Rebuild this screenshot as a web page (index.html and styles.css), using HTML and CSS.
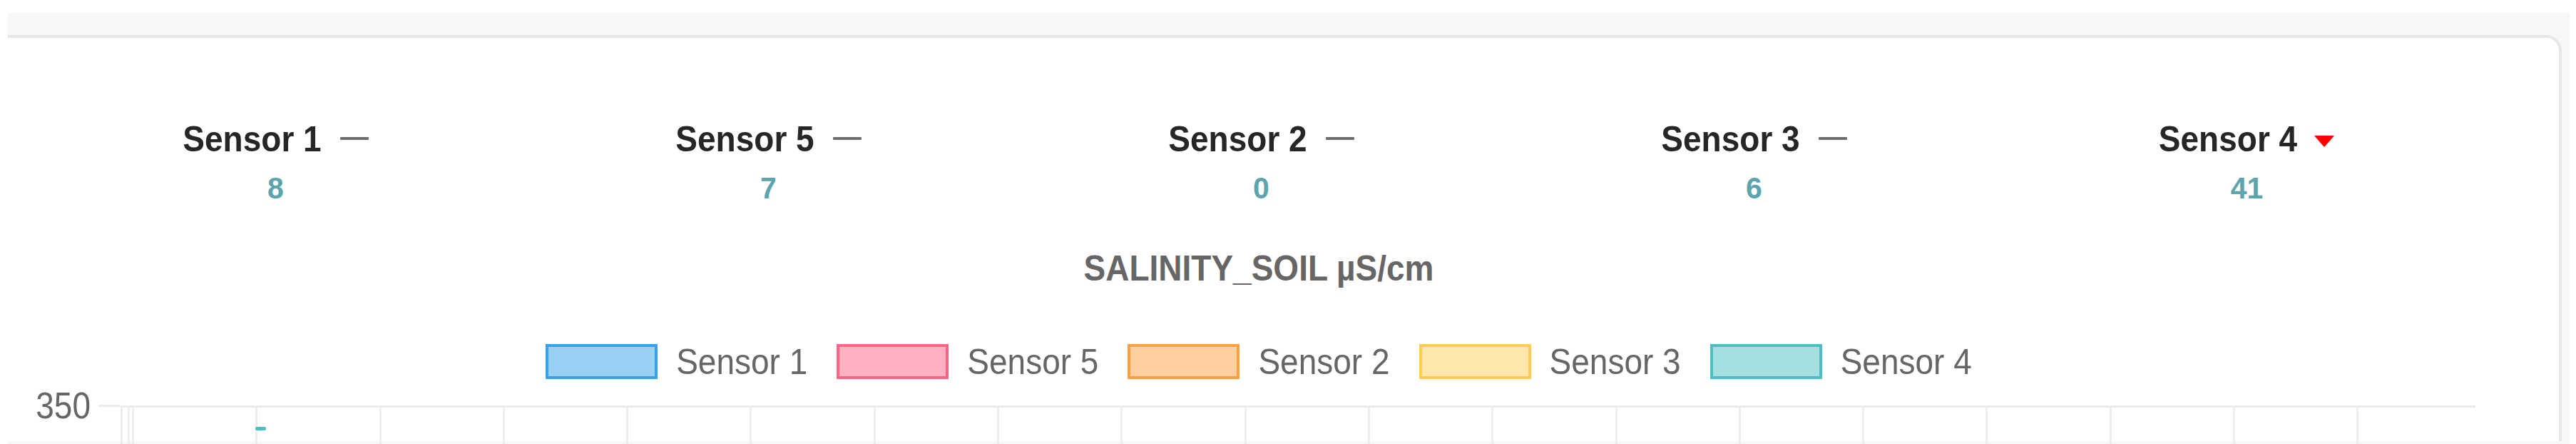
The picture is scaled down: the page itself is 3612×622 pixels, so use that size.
FILE: index.html
```html
<!DOCTYPE html>
<html lang="en">
<head>
<meta charset="utf-8">
<title>Salinity soil</title>
<link rel="stylesheet" href="styles.css">
</head>
<body>
<div class="frame">
  <div class="card">
    <div class="content">
      <div class="stats">
        <div class="stat">
          <div class="stat-head"><span class="stat-name">Sensor 1</span><span class="flat"></span></div>
          <div class="stat-value">8</div>
        </div>
        <div class="stat">
          <div class="stat-head"><span class="stat-name">Sensor 5</span><span class="flat"></span></div>
          <div class="stat-value">7</div>
        </div>
        <div class="stat">
          <div class="stat-head"><span class="stat-name">Sensor 2</span><span class="flat"></span></div>
          <div class="stat-value">0</div>
        </div>
        <div class="stat">
          <div class="stat-head"><span class="stat-name">Sensor 3</span><span class="flat"></span></div>
          <div class="stat-value">6</div>
        </div>
        <div class="stat">
          <div class="stat-head"><span class="stat-name">Sensor 4</span>
            <svg class="down" width="30" height="17" viewBox="0 0 30 17"><path d="M1 1 H29 L16 16 Q15 17 14 16 Z" fill="#ff0000"/></svg>
          </div>
          <div class="stat-value">41</div>
        </div>
      </div>

      <div class="chart">
        <div class="chart-title">SALINITY_SOIL µS/cm</div>
        <div class="legend">
          <div class="legend-item"><span class="swatch sw-blue"></span><span class="legend-label">Sensor 1</span></div>
          <div class="legend-item"><span class="swatch sw-pink"></span><span class="legend-label">Sensor 5</span></div>
          <div class="legend-item"><span class="swatch sw-orange"></span><span class="legend-label">Sensor 2</span></div>
          <div class="legend-item"><span class="swatch sw-yellow"></span><span class="legend-label">Sensor 3</span></div>
          <div class="legend-item"><span class="swatch sw-teal"></span><span class="legend-label">Sensor 4</span></div>
        </div>
        <div class="plot">
          <div class="y-axis">
            <div class="y-tick"><span class="y-label">350</span><span class="tick-mark"></span></div>
          </div>
          <div class="plot-area">
            <span class="data-mark"></span>
          </div>
        </div>
      </div>
    </div>
  </div>
</div>
</body>
</html>
```

FILE: styles.css
```css
html, body {
  margin: 0;
  padding: 0;
  background: #ffffff;
  overflow: hidden;
  height: 622px;
}

body {
  font-family: "Liberation Sans", Arial, sans-serif;
}

.frame {
  margin: 18px 0 0 11px;
  width: 3581px;
  padding: 31px 11px 0 0;
  background: #f7f7f7;
  height: 573px;
}

.card {
  background: #ffffff;
  border-top: 4px solid #e7e7e7;
  border-right: 4px solid #e7e7e7;
  border-top-right-radius: 22px;
  height: 569px;
  padding-left: 29px;
  box-sizing: border-box;
}

.content {
  width: 3450px;
}

.stats {
  display: grid;
  grid-template-columns: repeat(5, 691px);
  margin-left: 1px;
  padding-top: 114px;
}

.stat {
  display: flex;
  flex-direction: column;
  align-items: center;
}

.stat-head {
  display: flex;
  align-items: center;
  height: 54px;
}

.stat-name {
  display: inline-block;
  font-weight: bold;
  font-size: 46px;
  line-height: 54px;
  color: #262626;
  transform: scaleY(1.1);
}

.flat {
  width: 40px;
  height: 4px;
  background: #6e6e6e;
  margin-left: 26px;
  border-radius: 1px;
}

.down {
  margin-left: 23px;
  margin-top: 6px;
}

.stat-value {
  margin-top: 19px;
  font-weight: bold;
  font-size: 41px;
  line-height: 46px;
  color: #5ca5ad;
  transform: scaleY(1.05);
}

.chart {
  display: flex;
  flex-direction: column;
  align-items: center;
}

.chart-title {
  margin-top: 63px;
  font-weight: bold;
  font-size: 46px;
  line-height: 54px;
  color: #666666;
  transform: scaleY(1.08);
}

.legend {
  margin-top: 78px;
  display: flex;
  align-items: center;
  gap: 41px;
  height: 50px;
}

.legend-item {
  display: flex;
  align-items: center;
  gap: 26px;
}

.swatch {
  width: 157px;
  height: 49px;
  box-sizing: border-box;
  border: 4px solid;
}

.sw-blue { background: #9bd0f5; border-color: #36a2eb; }
.sw-pink { background: #ffb1c1; border-color: #ff6384; }
.sw-orange { background: #ffcf9f; border-color: #ff9f40; }
.sw-yellow { background: #ffe6aa; border-color: #ffcd56; }
.sw-teal { background: #a5dfdf; border-color: #4bc0c0; }

.legend-label {
  display: inline-block;
  font-size: 46px;
  line-height: 50px;
  color: #666666;
  transform: scaleY(1.1);
}

.plot {
  align-self: stretch;
  margin-top: 37px;
  display: flex;
  height: 60px;
}

.y-axis {
  width: 129px;
  flex: none;
}

.y-tick {
  display: flex;
  align-items: center;
  justify-content: flex-end;
  margin-top: -20px;
  height: 40px;
}

.y-label {
  display: inline-block;
  font-size: 46px;
  line-height: 40px;
  color: #666666;
  margin-right: 11px;
  transform: scaleY(1.12);
}

.tick-mark {
  width: 31px;
  height: 3px;
  background: #ebebeb;
}

.plot-area {
  position: relative;
  width: 3302px;
  flex: none;
  border-top: 3px solid #ebebeb;
  border-left: 3px solid #ececec;
  box-sizing: border-box;
  background-image: repeating-linear-gradient(to right, #eeeeee 0, #eeeeee 3px, transparent 3px, transparent 173.3px);
  background-position: 13px 0;
  background-repeat: repeat-x;
}

.data-mark {
  position: absolute;
  left: 186px;
  top: 27px;
  width: 15px;
  height: 5px;
  border-radius: 2px;
  background: #4bc0c0;
}
```
